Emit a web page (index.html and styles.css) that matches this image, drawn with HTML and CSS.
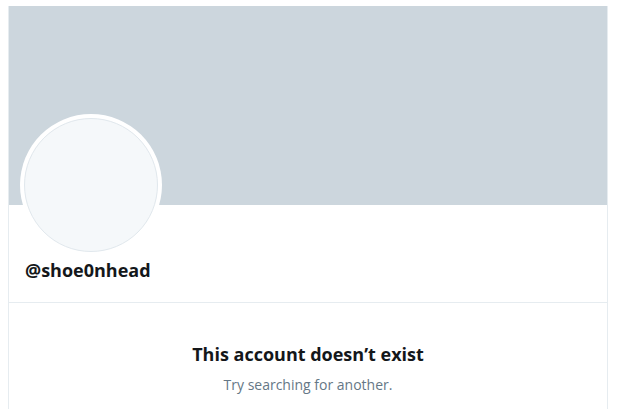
FILE: index.html
```html
<!DOCTYPE html>
<html>
<head>
<meta charset="utf-8">
<link rel="stylesheet" href="styles.css">
</head>
<body>
<div class="column">
  <div class="banner"></div>
  <div class="profile">
    <div class="avatar"></div>
    <div class="handle">@shoe0nhead</div>
  </div>
  <div class="empty">
    <div class="empty-title">This account doesn’t exist</div>
    <div class="empty-sub">Try searching for another.</div>
  </div>
</div>
</body>
</html>
```
FILE: styles.css
```css
html, body {
  margin: 0;
  padding: 0;
  background: #ffffff;
}
body {
  font-family: "Open Sans", "Noto Sans", sans-serif;
  color: #14171a;
}
.column {
  margin: 6px 0 0 8px;
  width: 598px;
  border-left: 1px solid #e6ecf0;
  border-right: 1px solid #e6ecf0;
  min-height: 403px;
}
.banner {
  height: 199px;
  background: #ccd6dd;
}
.profile {
  display: flex;
  flex-direction: column;
  align-items: flex-start;
  padding: 0 16px 20px 16px;
  border-bottom: 1px solid #e6ecf0;
}
.avatar {
  margin: -87px 0 0 -1px;
  width: 132px;
  height: 132px;
  border-radius: 50%;
  background: #f5f8fa;
  border: 1px solid #e1e8ed;
  box-shadow: 0 0 0 4px #ffffff;
}
.handle {
  margin-top: 6px;
  font-weight: 700;
  font-size: 18px;
  line-height: 24px;
}
.empty {
  padding-top: 39px;
  text-align: center;
}
.empty-title {
  font-weight: 700;
  font-size: 18px;
  line-height: 24px;
}
.empty-sub {
  margin-top: 9px;
  font-size: 14px;
  line-height: 20px;
  color: #657786;
}
```
